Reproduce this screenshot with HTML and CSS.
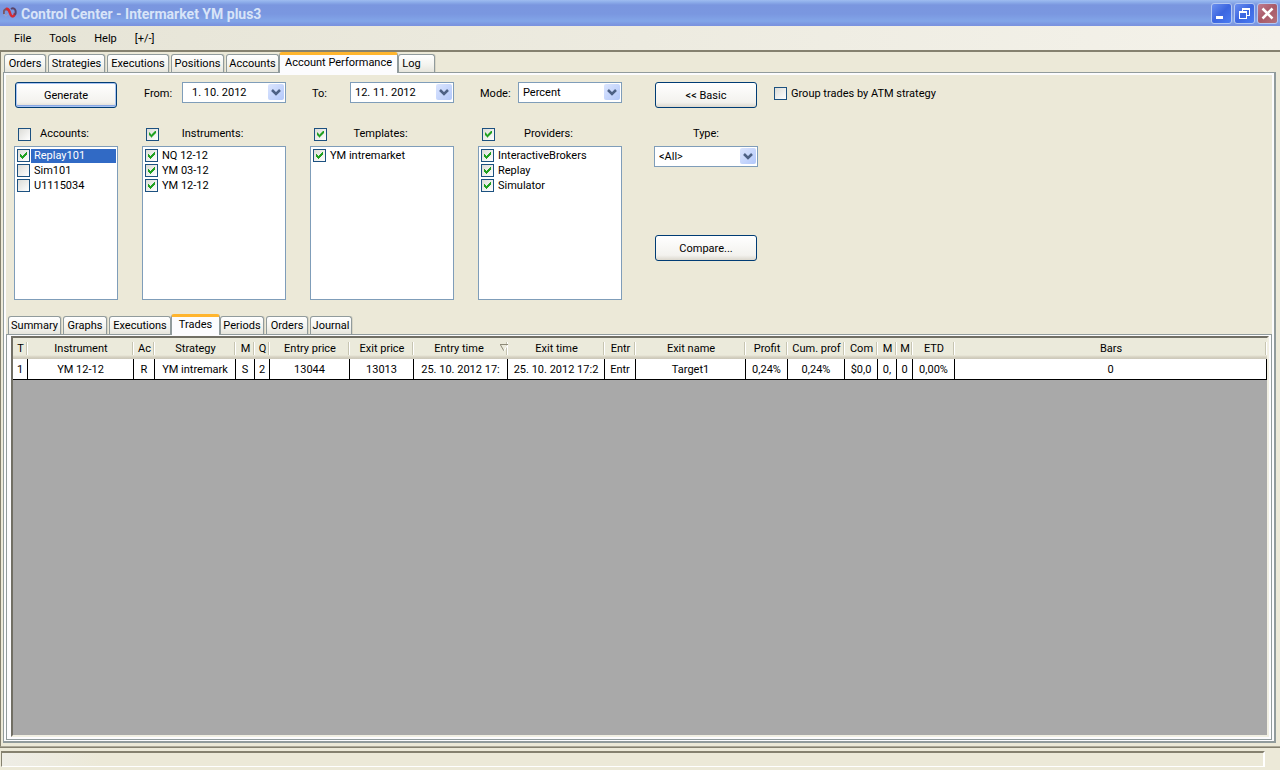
FILE: index.html
```html
<!DOCTYPE html>
<html lang="en">
<head>
<meta charset="utf-8">
<title>Control Center - Intermarket YM plus3</title>
<link rel="stylesheet" href="styles.css">
</head>
<body>
<div class="window">
  <header class="titlebar">
    <svg class="logo" width="14" height="14" viewBox="0 0 14 14"><path d="M1 8C0 4 3 2 5 4" fill="none" stroke="#7d5560" stroke-width="2"/><path d="M3 3C6 2 6 5 7 7C8 11 11 12 12 7" fill="none" stroke="#d42a34" stroke-width="2.500"/><path d="M8 3C11 1 14 4 12 9" fill="none" stroke="#5a4468" stroke-width="2"/><path d="M1 8C2 11 4 10 5 8" fill="none" stroke="#a9a9bd" stroke-width="1"/></svg>
    <h1 class="title">Control Center - Intermarket YM plus3</h1>
    <button class="winbtn" aria-label="Minimize"><svg width="19" height="19" viewBox="0 0 19 19"><path d="M4 12H11V15H4Z" fill="#fff"/></svg></button>
    <button class="winbtn" aria-label="Restore"><svg width="19" height="19" viewBox="0 0 19 19"><path d="M7 4H15V12H12V11H14V6H8V7H7Z" fill="#fff"/><path fill-rule="evenodd" d="M4 7H12V15H4ZM5 9V14H11V9Z" fill="#fff"/></svg></button>
    <button class="winbtn close" aria-label="Close"><svg width="19" height="19" viewBox="0 0 19 19"><path d="M4.500 4.500L14.500 14.500M14.500 4.500L4.500 14.500" stroke="#fff" stroke-width="2.500"/></svg></button>
  </header>
  <nav class="menubar">
    <button>File</button><button>Tools</button><button>Help</button><button>[+/-]</button>
  </nav>
  <main class="main">
    <div class="tabs" role="tablist">
      <button class="tab t-s" role="tab">Orders</button>
      <button class="tab t-l" role="tab">Strategies</button>
      <button class="tab t-xl" role="tab">Executions</button>
      <button class="tab t-m" role="tab">Positions</button>
      <button class="tab t-m" role="tab">Accounts</button>
      <button class="tab active t-wide" role="tab" aria-selected="true">Account Performance</button>
      <button class="tab t-log" role="tab">Log</button>
    </div>
    <section class="panel">
      <form class="filters">
        <button type="button" class="push default">Generate</button>
        <div class="field"><label for="from">From:</label><span class="combo"><input id="from" class="date" type="text" value="1. 10. 2012"><svg class="arrow" width="16" height="16" viewBox="0 0 16 16"><path d="M4 6L8 10L12 6" fill="none" stroke="#4d6185" stroke-width="2.500"/></svg></span></div>
        <div class="field"><label for="to">To:</label><span class="combo"><input id="to" type="text" value="12. 11. 2012"><svg class="arrow" width="16" height="16" viewBox="0 0 16 16"><path d="M4 6L8 10L12 6" fill="none" stroke="#4d6185" stroke-width="2.500"/></svg></span></div>
        <div class="field"><label for="mode">Mode:</label><span class="combo"><select id="mode"><option>Percent</option></select><svg class="arrow" width="16" height="16" viewBox="0 0 16 16"><path d="M4 6L8 10L12 6" fill="none" stroke="#4d6185" stroke-width="2.500"/></svg></span></div>
        <button type="button" class="push after-lists">&lt;&lt; Basic</button>
        <label class="group"><input type="checkbox">Group trades by ATM strategy</label>

        <div class="choice">
          <label class="head"><input type="checkbox"><span>Accounts:</span></label>
          <ul class="list">
            <li><label class="selected"><input type="checkbox" checked><span>Replay101</span></label></li>
            <li><label><input type="checkbox"><span>Sim101</span></label></li>
            <li><label><input type="checkbox"><span>U1115034</span></label></li>
          </ul>
        </div>
        <div class="choice">
          <label class="head"><input type="checkbox" checked><span>Instruments:</span></label>
          <ul class="list">
            <li><label><input type="checkbox" checked><span>NQ 12-12</span></label></li>
            <li><label><input type="checkbox" checked><span>YM 03-12</span></label></li>
            <li><label><input type="checkbox" checked><span>YM 12-12</span></label></li>
          </ul>
        </div>
        <div class="choice">
          <label class="head"><input type="checkbox" checked><span>Templates:</span></label>
          <ul class="list">
            <li><label><input type="checkbox" checked><span>YM intremarket</span></label></li>
          </ul>
        </div>
        <div class="choice">
          <label class="head"><input type="checkbox" checked><span>Providers:</span></label>
          <ul class="list">
            <li><label><input type="checkbox" checked><span>InteractiveBrokers</span></label></li>
            <li><label><input type="checkbox" checked><span>Replay</span></label></li>
            <li><label><input type="checkbox" checked><span>Simulator</span></label></li>
          </ul>
        </div>
        <div class="choice type after-lists">
          <label class="head" for="type"><span>Type:</span></label>
          <span class="combo"><select id="type"><option>&lt;All&gt;</option></select><svg class="arrow" width="16" height="16" viewBox="0 0 16 16"><path d="M4 6L8 10L12 6" fill="none" stroke="#4d6185" stroke-width="2.500"/></svg></span>
          <button type="button" class="push compare">Compare...</button>
        </div>
      </form>

      <div class="tabs sub" role="tablist">
        <button class="tab t-m" role="tab">Summary</button>
        <button class="tab t-g" role="tab">Graphs</button>
        <button class="tab t-xl" role="tab">Executions</button>
        <button class="tab active t-trades" role="tab" aria-selected="true">Trades</button>
        <button class="tab t-g" role="tab">Periods</button>
        <button class="tab t-s" role="tab">Orders</button>
        <button class="tab t-s" role="tab">Journal</button>
      </div>
      <div class="subpanel">
        <div class="gridview">
          <table>
            <colgroup><col class="c15"><col class="c106"><col class="c21"><col class="c81"><col class="c19"><col class="c15"><col class="c80"><col class="c64"><col class="c94"><col class="c97"><col class="c31"><col class="c110"><col class="c42"><col class="c57"><col class="c33"><col class="c19"><col class="c16"><col class="c42"><col></colgroup>
            <thead><tr><th>T</th><th>Instrument</th><th>Ac</th><th>Strategy</th><th>M</th><th>Q</th><th>Entry price</th><th>Exit price</th><th class="sorted"><span>Entry time</span><svg width="8" height="8" viewBox="0 0 8 8"><path d="M0 .5H8M.5 1L4 7" fill="none" stroke="#8d8a78"/><path d="M7.500 1L4 7" stroke="#fff"/></svg></th><th>Exit time</th><th>Entr</th><th>Exit name</th><th>Profit</th><th>Cum. prof</th><th>Com</th><th>M</th><th>M</th><th>ETD</th><th>Bars</th></tr></thead>
            <tbody><tr><td>1</td><td>YM 12-12</td><td>R</td><td>YM intremark</td><td>S</td><td>2</td><td>13044</td><td>13013</td><td>25. 10. 2012 17:</td><td>25. 10. 2012 17:2</td><td>Entr</td><td>Target1</td><td>0,24%</td><td>0,24%</td><td>$0,0</td><td>0,</td><td>0</td><td>0,00%</td><td>0</td></tr></tbody>
          </table>
        </div>
      </div>
    </section>
  </main>
  <footer class="status"><div class="well"></div></footer>
</div>
</body>
</html>
```
FILE: styles.css
```css
* { box-sizing: border-box; }
body { margin: 0; font: 11px/14px Roboto, "Liberation Sans", Arial, sans-serif; color: #000; background: #ece9d8; }
button, input, select { font: inherit; color: inherit; margin: 0; border-radius: 0; }
.window { display: flex; flex-direction: column; height: 100vh; }

.titlebar { display: flex; align-items: center; gap: 2px; height: 26px; padding: 0 2px 0 3px; background: linear-gradient(#9fbcf0 0, #8eaeea 2px, #7a96df 5px, #7a97e0 14px, #82a5e8 21px, #7a93df 25px); }
.logo { flex: none; }
.title { flex: 1; margin: 0 0 0 2px; padding-top: 1px; font: bold 14px/16px Roboto, sans-serif; color: #d8e4f8; }
.winbtn { width: 21px; height: 21px; padding: 0; border: 1px solid #b4c8f2; border-radius: 3px; background: linear-gradient(135deg, #6b8ff0, #3c66e0 50%, #4a7cf2); }
.winbtn svg { display: block; }
.winbtn.close { background: linear-gradient(135deg, #c07c90, #a85a68 50%, #b3717c); }

.menubar { display: flex; align-items: center; height: 24px; padding-left: 5px; background: linear-gradient(90deg, #e6e4d6, #f4f2ea); }
.menubar button { height: 20px; padding: 2px 6px 0; border: 0; background: none; margin: 0 3px; }

.main { flex: 1; min-height: 0; display: flex; flex-direction: column; padding: 1px 4px 3px 2px; border-top: 2px solid #85816f; border-left: 1px solid #85816f; border-bottom: 1px solid #aca899; }
.tabs { display: flex; align-items: flex-end; gap: 2px; height: 19px; padding-left: 1px; flex: none; }
.tab { height: 18px; padding: 1px 0 0; border: 1px solid #919b9c; border-bottom: 0; border-radius: 3px 3px 0 0; background: linear-gradient(#fff, #f3f3ee 60%, #e6e5dc); text-align: center; white-space: nowrap; box-shadow: 1px 0 0 #d8d5c5; }
.tab.active { position: relative; height: 21px; margin: 0 -2px -1px; padding-bottom: 3px; border-top: 3px solid #ffb52e; background: #fcfcfe; box-shadow: none; }
.t-s { width: 42px; }
.t-g { width: 44px; }
.t-m { width: 53px; }
.t-l { width: 57px; }
.t-xl { width: 62px; }
.t-wide { width: 119px; }
.t-trades { width: 49px; }
.t-log { width: 37px; padding-right: 10px; }

.panel { flex: 1; min-height: 0; display: flex; flex-direction: column; padding: 9px 2px 1px; border: 1px solid #919b9c; border-width: 1px 2px 2px 1px; box-shadow: inset 0 0 0 2px #fcfcfe; }
.filters { display: grid; grid-template-columns: 104px 144px 144px 144px 104px 1fr; column-gap: 24px; row-gap: 17px; padding-left: 8px; }
.after-lists { margin-left: 8px; }
.field { display: flex; justify-content: space-between; align-items: flex-start; }
.field label { padding: 5px 0 0 2px; }
.combo { position: relative; display: block; width: 104px; height: 21px; }
.combo input, .combo select { display: block; width: 100%; height: 21px; padding: 0 0 0 4px; border: 1px solid #7f9db9; background: #fff; appearance: none; outline: 0; }
.combo .date { padding-left: 9px; }
.arrow { position: absolute; right: 2px; top: 2px; border-radius: 2px; background: linear-gradient(135deg, #dbe5fe, #b3c8fa); pointer-events: none; }
.push { width: 102px; height: 26px; margin-left: 1px; padding: 2px 0 0; border: 1px solid #003c74; border-radius: 3px; background: linear-gradient(#fff, #f3f2ee 80%, #dcd8ce); }
.push.default { box-shadow: inset 0 0 0 1px #a9c4f2, inset 0 -2px 0 #89a8e4; }
.push.after-lists { margin-left: 9px; }
.group { display: flex; align-items: center; gap: 4px; height: 23px; }

input[type="checkbox"] { appearance: none; flex: none; width: 13px; height: 13px; padding: 2px; border: 1px solid #1c5180; background: linear-gradient(135deg, #dcdcd7, #fff); }
input[type="checkbox"]:checked::after { content: ""; display: block; width: 7px; height: 7px; background: #21a121; clip-path: polygon(0 2px, 1px 2px, 1px 3px, 2px 3px, 2px 4px, 3px 4px, 3px 3px, 4px 3px, 4px 2px, 5px 2px, 5px 1px, 6px 1px, 6px 0, 7px 0, 7px 3px, 6px 3px, 6px 4px, 5px 4px, 5px 5px, 4px 5px, 4px 6px, 3px 6px, 3px 7px, 2px 7px, 2px 6px, 1px 6px, 1px 5px, 0 5px); }
.head { display: flex; align-items: center; height: 18px; padding-left: 4px; margin-bottom: 3px; }
.head span { flex: 1; padding-right: 20px; text-align: center; }
.type .head { width: 104px; padding-left: 0; }
.type .head span { padding-right: 0; }
.list { height: 154px; margin: 0; padding: 1px; border: 1px solid #7f9db9; background: #fff; list-style: none; }
.list label { display: flex; align-items: center; gap: 1px; height: 15px; padding-left: 1px; }
.list span { flex: 1; padding-left: 3px; }
.list .selected span { background: #316ac5; color: #fff; }
.compare { margin-top: 68px; }

.sub { margin-top: 14px; padding-left: 2px; height: 20px; }
.subpanel { flex: 1; min-height: 0; display: flex; padding: 1px 2px 2px 4px; border: 1px solid #919b9c; background: #fcfcfe; }
.gridview { flex: 1; border: 2px solid; border-color: #716f64 #f1efe2 #f1efe2 #716f64; background: #a9a9a9; }
table { width: 100%; table-layout: fixed; border-collapse: separate; border-spacing: 0; }
th, td { padding: 1px 0 0; overflow: hidden; white-space: nowrap; text-align: center; font-weight: normal; }
th { height: 21px; background: linear-gradient(90deg, transparent calc(100% - 2px), #c7c5b2 calc(100% - 2px), #c7c5b2 calc(100% - 1px), #fff 0) 0 4px / 100% 13px no-repeat, linear-gradient(#ebeadb 17px, #d6d2c2 19px, #cbc7b8); }
td { height: 21px; background: #fff; border-right: 1px solid #000; border-bottom: 1px solid #000; }
.sorted span { margin: 0 16px 0 20px; }
.c15 { width: 15px; } .c16 { width: 16px; } .c19 { width: 19px; } .c21 { width: 21px; } .c31 { width: 31px; } .c33 { width: 33px; } .c42 { width: 42px; } .c57 { width: 57px; } .c64 { width: 64px; } .c80 { width: 80px; } .c81 { width: 81px; } .c94 { width: 94px; } .c97 { width: 97px; } .c106 { width: 106px; } .c110 { width: 110px; }

.status { height: 23px; flex: none; padding: 3px 15px 3px 1px; border-top: 1px solid #85816f; }
.well { height: 16px; border: 2px solid; border-color: #85816f #fff #fff #85816f; border-width: 2px 2px 1px 1px; background: linear-gradient(90deg, #eeede6, #ece9d8 100px); }
```
